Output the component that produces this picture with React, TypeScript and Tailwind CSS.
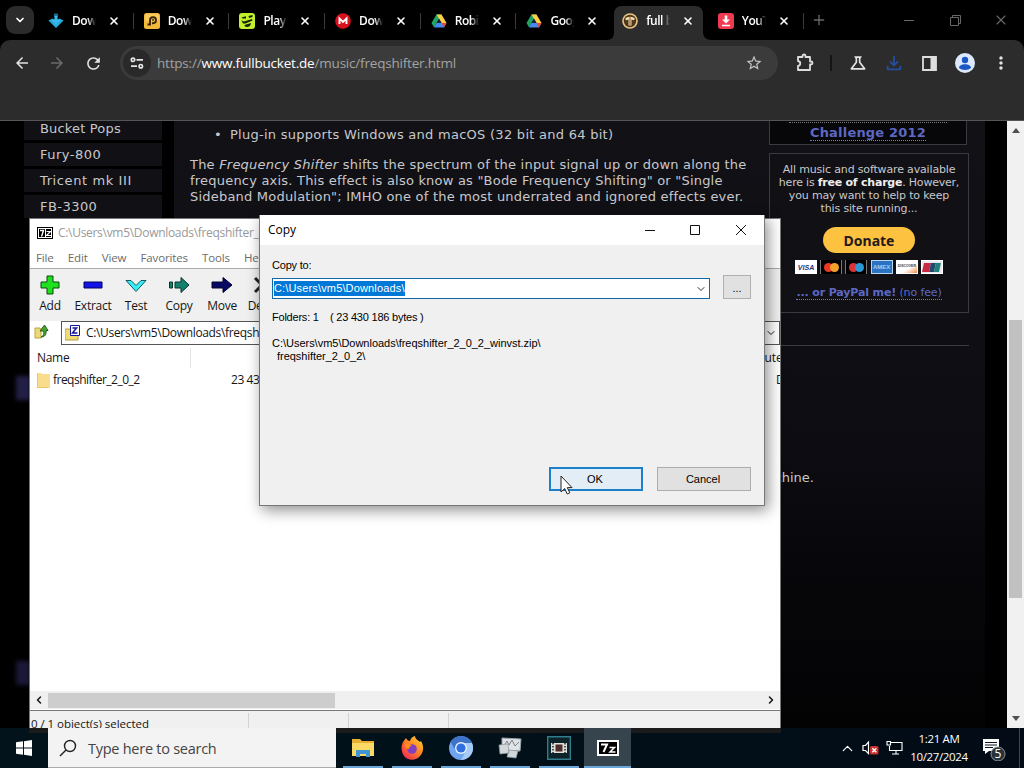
import type { ReactNode } from "react";
import {
  MdArrowBack,
  MdArrowForward,
  MdRefresh,
  MdStarBorder,
  MdOutlineScience,
  MdOutlineFileDownload,
  MdMoreVert,
} from "react-icons/md";
import { ChevronDown, ChevronLeft, ChevronRight, ChevronUp, Plus, X } from "lucide-react";

const SEGOE = "font-['Open_Sans','Noto_Sans',sans-serif]";
const DIALOG = "font-['Liberation_Sans',Arial,sans-serif]";
const VERDANA = "font-['DejaVu_Sans',Verdana,sans-serif]";

/* ---------- favicons ---------- */

const DiamondIcon = () => (
  <svg width="16" height="16" viewBox="0 0 16 16">
    <circle cx="8" cy="2.400" r="2.200" fill="#1c6e96" />
    <path d="M0.500 7.500 4.500 5.500 8 7 11.500 5.500 15.500 7.500 8 15z" fill="#27a9dc" />
    <path d="M6.500 3h3v4h3L8 11 3.500 7h3z" fill="#3db8e8" />
  </svg>
);

const PlugIcon = () => (
  <svg width="16" height="16" viewBox="0 0 16 16">
    <rect width="16" height="16" rx="2.500" fill="#f3b93b" />
    <rect x="1" y="1" width="14" height="7" rx="2" fill="#f8cb5c" />
    <path d="M3.500 11.500H6V7a3 3 0 1 1 3 3.200H8" fill="none" stroke="#3b2608" strokeWidth="1.900" />
    <path d="M9 6v2" stroke="#3b2608" strokeWidth="1.400" />
  </svg>
);

const FaceIcon = () => (
  <svg width="16" height="16" viewBox="0 0 16 16">
    <rect width="16" height="16" rx="3" fill="#c3f02c" />
    <path d="M2.500 4.500 7 3.200v2.300H3.500zM9.500 3 13.500 2v2L10 5z" fill="#15210a" />
    <path d="M2.500 7.500 5 8.500l8-2.500.5 1.500-7 3H4zM5.500 12l6.500-2c-.5 3-2 4-4 4-1.500 0-2.500-1-2.500-2z" fill="#15210a" />
  </svg>
);

const MegaIcon = () => (
  <svg width="16" height="16" viewBox="0 0 16 16">
    <circle cx="8" cy="8" r="7.800" fill="#d9111f" />
    <path d="M4.500 11V5.500L8 9l3.500-3.500V11" fill="none" stroke="#fff" strokeWidth="1.900" />
  </svg>
);

const DriveIcon = () => (
  <svg width="16" height="16" viewBox="0 0 16 16">
    <path d="M5.500 1.500h5L8 6 3 14.500.5 10z" fill="#1fa463" />
    <path d="M10.500 1.500 15.500 10h-5L5.500 1.500z" fill="#ffcf48" />
    <path d="M5.500 10h10L13 14.500H3z" fill="#4688f4" />
    <path d="M13 14.500 10.500 10h5z" fill="#e5483a" />
    <path d="M8 5.800 10.500 10h-5z" fill="#15233a" />
  </svg>
);

const BucketIcon = () => (
  <svg width="16" height="16" viewBox="0 0 16 16">
    <circle cx="8" cy="8" r="7.800" fill="#e8c586" />
    <circle cx="8" cy="8" r="6.200" fill="#50361a" />
    <path d="M3 6c2-3 8-3 10 0l-1.500 1.300-2-.8v6h-3v-6l-2 .8z" fill="#f3ddb0" />
    <path d="M8 3v9" stroke="#7a5a30" />
  </svg>
);

const TubeIcon = () => (
  <svg width="16" height="16" viewBox="0 0 16 16">
    <rect width="16" height="16" rx="3" fill="#ef3a52" />
    <path d="M6.700 2.500h2.600V6.500H12L8 10.500 4 6.500h2.700zM4 11.700h8v1.600H4z" fill="#fff" />
  </svg>
);

type TabDef = { title: string; icon: ReactNode; active?: boolean };
const TABS: TabDef[] = [
  { title: "Down", icon: <DiamondIcon /> },
  { title: "Down", icon: <PlugIcon /> },
  { title: "Play", icon: <FaceIcon /> },
  { title: "Down", icon: <MegaIcon /> },
  { title: "Robin", icon: <DriveIcon /> },
  { title: "Goog", icon: <DriveIcon /> },
  { title: "full b", icon: <BucketIcon />, active: true },
  { title: "YouT", icon: <TubeIcon /> },
];

function Tab({ tab, divider }: { tab: TabDef; divider: boolean }) {
  return (
    <div
      className={
        "relative flex h-[34px] w-[95.7px] shrink-0 items-center pb-[5px] pl-[10px] " +
        (tab.active ? "z-10" : "")
      }
    >
      {tab.active && (
        <svg className="absolute top-0 -left-[6px] -z-10" width="106" height="34" viewBox="0 0 106 34">
          <path d="M0 34c6 0 8-3 8-8V8c0-5 3-8 8-8h73c5 0 8 3 8 8v18c0 5 3 8 9 8z" fill="#2c2c2c" />
        </svg>
      )}
      {tab.icon}
      <span
        className={
          "ml-[8px] w-[25px] overflow-hidden text-[12px] leading-[18px] font-semibold tracking-[-0.45px] whitespace-nowrap text-white " +
          "[mask-image:linear-gradient(to_right,#000_62%,transparent_96%)]"
        }
      >
        {tab.title}
      </span>
      <X className="ml-[11px] h-[12px] w-[12px] text-white" strokeWidth={3.2} />
      {divider && <i className="ml-auto h-[16px] w-px bg-[#3c3c3c]" />}
    </div>
  );
}

function Browser() {
  return (
    <div className={"flex h-[121px] shrink-0 flex-col bg-black " + SEGOE}>
      <div className="flex h-[40px] shrink-0 items-end">
        <div className="mb-[6px] ml-[6px] flex h-[28px] w-[28px] items-center justify-center rounded-[9px] bg-[#2b2b2b]">
          <ChevronDown className="h-[12px] w-[12px] text-white" strokeWidth={3.400} />
        </div>
        <div className="flex pl-[4px]">
          {TABS.map((t, i) => (
            <Tab key={i} tab={t} divider={i !== 5 && i !== 6} />
          ))}
        </div>
        <Plus className="mb-[12px] ml-[7px] h-[16px] w-[16px] text-[#686868]" strokeWidth={2} />
        <div className="mb-[12px] ml-auto flex items-center pr-[15px] text-[#686868]">
          <i className="mr-[36px] h-px w-[10px] bg-[#686868]" />
          <svg className="mr-[32px]" width="11" height="11" viewBox="0 0 11 11" fill="none" stroke="currentColor">
            <path d="M.5 2.500h8v8h-8zM2.500 2.500v-2h8v8h-2" />
          </svg>
          <X className="h-[16px] w-[16px]" strokeWidth={1.600} />
        </div>
      </div>
      <div className="flex flex-1 flex-col rounded-t-[10px] border-b border-[#555] bg-[#2c2c2c]">
        <div className="flex h-[46px] items-center text-[#e4e4e4]">
          <MdArrowBack className="ml-[13px] h-[18px] w-[18px]" />
          <MdArrowForward className="ml-[17px] h-[18px] w-[18px] text-[#6a6a6a]" />
          <MdRefresh className="ml-[18px] h-[19px] w-[19px]" />
          <div className="ml-[17px] flex h-[34px] w-[658px] items-center rounded-full bg-[#3b3b3b]">
            <div className="ml-[3px] flex h-[28px] w-[28px] items-center justify-center rounded-full bg-[#292929]">
              <svg width="14" height="12" viewBox="0 0 14 12" fill="none" stroke="#e5e5e5" strokeWidth="1.700">
                <circle cx="3" cy="2.800" r="1.700" />
                <path d="M6.500 2.800H13M1 9.200h6" />
                <circle cx="10.800" cy="9.200" r="1.700" />
              </svg>
            </div>
            <span className="ml-[6px] text-[13.500px] tracking-[-0.2px] whitespace-nowrap text-[#a3a3a3]">
              https://<span className="text-white">www.fullbucket.de</span>/music/freqshifter.html
            </span>
            <MdStarBorder className="mr-[15px] ml-auto h-[18px] w-[18px] text-[#c4c4c4]" />
          </div>
          <svg className="ml-[17px]" width="20" height="20" viewBox="0 0 20 20">
            <path
              d="M3 4h4.500V3a1.500 1.500 0 0 1 3 0v1H15v4.500h1a1.500 1.500 0 0 1 0 3h-1V17H3v-4c3-.5 3-4.500 0-5z"
              fill="none"
              stroke="#dedede"
              strokeWidth="1.800"
              strokeLinejoin="round"
            />
          </svg>
          <i className="ml-[15px] h-[16px] w-[2px] bg-[#151515]" />
          <MdOutlineScience className="ml-[16px] h-[20px] w-[20px]" />
          <MdOutlineFileDownload className="ml-[15px] h-[22px] w-[22px] text-[#254e9f]" />
          <svg className="ml-[17px]" width="15" height="15" viewBox="0 0 15 15">
            <path d="M1 1h13v13H1z" fill="none" stroke="#dedede" strokeWidth="1.800" />
            <path d="M8.500 1H14v13H8.500z" fill="#dedede" />
          </svg>
          <svg className="ml-[18px]" width="20" height="20" viewBox="0 0 20 20">
            <circle cx="10" cy="10" r="10" fill="#dde8fb" />
            <circle cx="10" cy="7" r="3.200" fill="#1a56c4" />
            <path d="M4 15c0-5 12-5 12 0-3 2.500-9 2.500-12 0z" fill="#1a56c4" />
          </svg>
          <MdMoreVert className="ml-[16px] h-[20px] w-[20px]" />
        </div>
      </div>
    </div>
  );
}

/* ---------- web page ---------- */

const CARD = "flex h-[14px] w-[22px] items-center justify-center border";

const INSTRUMENTS = [
  { name: "Bucket Pops", style: "h-[19px] pb-[3px] tracking-[0.17px]" },
  { name: "Fury-800", style: "h-[23px] tracking-[0.5px]" },
  { name: "Tricent mk III", style: "h-[23px] tracking-[0.6px]" },
  { name: "FB-3300", style: "h-[23px] tracking-[0.45px]" },
];

function PageContent() {
  return (
    <div className={"flex flex-1 overflow-hidden bg-black text-[#c8c8cc] " + VERDANA}>
      <div className="ml-[24px] flex w-[138px] shrink-0 flex-col gap-[3px]">
        {INSTRUMENTS.map((s) => (
          <div key={s.name} className={"flex shrink-0 items-center bg-[#101015] pl-[16px] text-[13px] " + s.style}>
            {s.name}
          </div>
        ))}
        <div className="mt-[155px] -ml-[8px] h-[24px] w-[14px] bg-[#221f46] blur-[2px]" />
        <div className="mt-[258px] -ml-[8px] h-[24px] w-[14px] bg-[#1a1836] blur-[2px]" />
      </div>
      <div className="ml-[12px] flex w-[811px] shrink-0 bg-linear-to-b from-[#111116] via-[#0d0d13] to-[#030304] pl-[16px]">
        <div className="w-[579px] shrink-0 text-[13px] leading-[16px] whitespace-nowrap">
          <div className="mt-[6px] flex tracking-[0.27px]">
            <span className="w-[40px] pr-[8px] text-right">•</span>
            Plug-in supports Windows and macOS (32 bit and 64 bit)
          </div>
          <p className="mt-[14px] tracking-[0.21px]">
            The <em>Frequency Shifter</em> shifts the spectrum of the input signal up or down along the
            <br />
            frequency axis. This effect is also know as "Bode Frequency Shifting" or "Single
            <br />
            Sideband Modulation"; IMHO one of the most underrated and ignored effects ever.
          </p>
          <p className="mt-[265px] text-right text-[13px]">
            <span className="mr-[-45px]">chine.</span>
          </p>
        </div>
        <div className="flex w-[200px] flex-col">
          <div className="h-[24px] w-[198px] border border-t-0 border-[#3a3a42] bg-[#07070a] text-center text-[13px] leading-[16px] font-bold tracking-[0.2px] text-[#5d68c4]">
            <div className="mx-auto h-[2px] w-[158px] border-b border-dotted border-[#777]" />
            <span className="mt-[2px] inline-block border-b border-dotted border-[#6f7bd8] leading-[15px]">Challenge 2012</span>
          </div>
          <div className="mt-[8px] flex h-[160px] flex-col items-center border border-[#3a3a42] bg-[#101015] pt-[9px] text-center text-[11px] leading-[13px] whitespace-nowrap">
            <div className="tracking-[-0.16px]">All music and software available</div>
            <div className="tracking-[-0.22px]">
              here is <b className="text-[#eee]">free of charge</b>. However,
            </div>
            <div className="tracking-[-0.15px]">you may want to help to keep</div>
            <div className="tracking-[-0.15px]">this site running...</div>
            <div className="mt-[12px] flex h-[26px] w-[92px] items-center justify-center rounded-full bg-[#fdc23f] font-['Noto_Sans',sans-serif] text-[14px] font-bold text-[#241a1a]">
              Donate
            </div>
            <div className="mt-[7px] flex gap-[3.200px] font-['Liberation_Sans',sans-serif] text-[7px] leading-none font-bold">
              <span className={CARD + " border-white bg-white text-[#27307c] italic"}>VISA</span>
              <span className={CARD + " border-y-0 border-[#777] bg-black"}>
                <i className="h-[9px] w-[9px] rounded-full bg-[#ea3a25]" />
                <i className="-ml-[3px] h-[9px] w-[9px] rounded-full bg-[#f4a12b]" />
              </span>
              <span className={CARD + " border-y-0 border-[#777] bg-black"}>
                <i className="h-[9px] w-[9px] rounded-full bg-[#df3238]" />
                <i className="-ml-[3px] h-[9px] w-[9px] rounded-full bg-[#2b98d4]" />
              </span>
              <span className={CARD + " border-[#b8d6f0] bg-[#2b73c0] text-[6px] text-[#a9cdf0]"}>AMEX</span>
              <span className={CARD + " overflow-hidden border-white bg-linear-to-br from-white from-60% to-[#ee8a35] text-[3.500px] text-[#444]"}>
                DISCOVER
              </span>
              <span className={CARD + " border-white bg-[#e9e9ee]"}>
                <i className="h-[9px] w-[7px] -skew-x-12 bg-[#c92a42]" />
                <i className="h-[9px] w-[5px] -skew-x-12 bg-[#24476f]" />
                <i className="h-[9px] w-[5px] -skew-x-12 bg-[#1f8079]" />
              </span>
            </div>
            <div className="mt-[12px] border-b border-dotted border-[#6f7bd8] leading-[13px] tracking-[-0.13px] text-[#5d68c4]">
              <b>... or PayPal me!</b> (no fee)
            </div>
          </div>
          <div className="mt-[32px] border-t border-[#3a3a42]" />
        </div>
      </div>
      <div className="ml-auto flex w-[17px] flex-col items-center bg-[#f1f1f1]">
        <svg className="mt-[7px]" width="8" height="5" viewBox="0 0 8 5">
          <path d="M0 5 4 0l4 5z" fill="#505050" />
        </svg>
        <div className="mt-[187px] h-[278px] w-[13px] bg-[#c1c1c1]" />
        <svg className="mt-auto mb-[7px]" width="8" height="5" viewBox="0 0 8 5">
          <path d="M0 0h8L4 5z" fill="#505050" />
        </svg>
      </div>
    </div>
  );
}

/* ---------- 7-Zip ---------- */

function SevenZip({ large = false }: { large?: boolean }) {
  return large ? (
    <svg width="22" height="16" viewBox="0 0 22 16" className="shrink-0">
      <rect width="22" height="16" fill="#fff" />
      <rect x="2" y="2" width="18" height="12" fill="#000" />
      <path d="M4 4.500h6L6.500 12" fill="none" stroke="#fff" strokeWidth="2" />
      <path d="M12.500 7.500h5l-4.500 4.500h5.500" fill="none" stroke="#fff" strokeWidth="1.500" />
    </svg>
  ) : (
    <svg width="16" height="12" viewBox="0 0 16 12" className="shrink-0">
      <rect width="16" height="12" fill="#000" />
      <rect x="1" y="1" width="14" height="10" fill="#fff" />
      <rect x="2" y="2" width="6" height="8" fill="#000" />
      <rect x="9" y="2" width="5" height="8" fill="#000" />
      <path d="M3 3.500h3.500L4.500 9.500" fill="none" stroke="#fff" strokeWidth="1.400" />
      <path d="M9.500 4.500h4l-4 4h4.500" fill="none" stroke="#fff" strokeWidth="1.200" />
    </svg>
  );
}

const TOOLS: { label: string; width: string; icon: ReactNode }[] = [
  {
    label: "Add",
    width: "w-[42px]",
    icon: <path d="M8 1h6v6h6v6h-6v6H8v-6H2V7h6z" fill="#1ee01e" stroke="#084808" />,
  },
  { label: "Extract", width: "w-[44px]", icon: <path d="M2 7h18v6H2z" fill="#1313e8" stroke="#000060" /> },
  {
    label: "Test",
    width: "w-[42px]",
    icon: <path d="m1 5.500 5 0 5 5 5-5 5 0-10 11z" fill="#35edf5" stroke="#135a62" />,
  },
  {
    label: "Copy",
    width: "w-[44px]",
    icon: <path d="M1.500 7h3v6h-3zM7 7h6V2.500L21 10l-8 7.500V13H7z" fill="#16806c" stroke="#06352e" />,
  },
  { label: "Move", width: "w-[42px]", icon: <path d="M1 7h11V2.500L21 10l-9 7.500V13H1z" fill="#080865" stroke="#02022e" /> },
  { label: "Delete", width: "w-[44px]", icon: <path d="m1 3 14 14M15 3 1 17" stroke="#222" strokeWidth="3" /> },
];

function ZipWindow() {
  return (
    <div className={"absolute top-[218px] left-[29px] flex h-[510px] w-[752px] flex-col overflow-hidden border border-b-0 border-[#777] bg-white text-[12px] text-[#151515] " + SEGOE}>
      <div className="flex h-[27px] shrink-0 items-center pl-[7px] whitespace-nowrap text-[#999]">
        <SevenZip />
        <span className="ml-[5px] text-[12px] tracking-[-0.3px]">C:\Users\vm5\Downloads\freqshifter_2_0_2_winvst.zip\</span>
      </div>
      <div className="flex h-[23px] shrink-0 items-center gap-[14.200px] border-b border-[#aaa] pt-[2px] pl-[6px] text-[11.500px] tracking-[-0.15px] text-[#6c6c6c]">
        {["File", "Edit", "View", "Favorites", "Tools", "Help"].map((m) => (
          <span key={m}>{m}</span>
        ))}
      </div>
      <div className="flex h-[52px] shrink-0 bg-[#f0f0f0] text-[12px] tracking-[-0.25px]">
        <div className="-ml-px flex">
          {TOOLS.map((t) => (
            <div key={t.label} className={"flex shrink-0 flex-col items-center pt-[6px] " + t.width}>
              <svg width="22" height="20" viewBox="0 0 22 20">
                {t.icon}
              </svg>
              <span className="mt-[2px] leading-[18px]">{t.label}</span>
            </div>
          ))}
        </div>
      </div>
      <div className="flex h-[24px] shrink-0 bg-[#f0f0f0]">
        <div className="w-[31px] bg-white pt-[2px] pl-[4px]">
          <svg width="15" height="16" viewBox="0 0 15 16">
            <path d="M1 5h5l1 2v8H1z" fill="#ecd979" stroke="#bca53f" />
            <path d="M7 14c3-1 3-4 2.500-6H6l4.500-6L14 7.500h-2c.5 4-1 6.500-5 6.500z" fill="#45a52f" stroke="#28631b" />
          </svg>
        </div>
        <div className="flex flex-1 items-center border border-[#555] bg-white">
          <svg className="ml-[3px]" width="16" height="16" viewBox="0 0 16 16">
            <path d="M0 4h6l1 2h6v9H0z" fill="#f0dd70" stroke="#b79e3b" />
            <path d="M5.500.500h9v10h-9z" fill="#fff" stroke="#1515a0" />
            <path d="M7.500 3h4l-4 5h5" fill="none" stroke="#1515a0" strokeWidth="1.500" />
          </svg>
          <span className="ml-[5px] tracking-[-0.33px]">C:\Users\vm5\Downloads\freqshifter_2_0_2_winvst.zip\</span>
          <ChevronDown className="mr-[2px] ml-auto h-[12px] w-[12px]" />
        </div>
      </div>
      <div className="flex h-[25px] shrink-0 items-center pt-px pl-[7px]">
        <span className="w-[153px] tracking-[-0.3px]">Name</span>
        <i className="h-[20px] w-px bg-[#e4e4e4]" />
        <span className="ml-auto w-[64px] overflow-hidden pl-[17px] whitespace-nowrap">Attributes</span>
      </div>
      <div className="flex h-[20px] shrink-0 items-center pl-[7px]">
        <svg width="13" height="15" viewBox="0 0 13 15">
          <path d="M0 0h4l1 1h8v14H0z" fill="#f9dd8d" />
          <path d="M.5.500v14h11" fill="none" stroke="#eec667" />
        </svg>
        <span className="ml-[3px] w-[178px] tracking-[-0.52px]">freqshifter_2_0_2</span>
        <span className="tracking-[-0.45px]">23 430 186</span>
        <span className="ml-auto w-[4px] overflow-hidden">D</span>
      </div>
      <div className="flex-1" />
      <div className="flex h-[18px] shrink-0 items-center bg-[#f0f0f0]">
        <ChevronLeft className="mr-[3px] ml-[3px] h-[12px] w-[12px]" strokeWidth={3} />
        <div className="h-[15px] w-[287px] bg-[#cdcdcd]" />
        <ChevronRight className="mr-[3px] ml-auto h-[12px] w-[12px]" strokeWidth={3} />
      </div>
      <div className="mt-px flex h-[18px] shrink-0 overflow-hidden border-t border-[#777] bg-[#f0f0f0] tracking-[-0.04px]">
        <span className="w-[218px] shrink-0 pt-[4px] pl-px text-[11.500px]">0 / 1 object(s) selected</span>
        {[0, 1, 2].map((n) => (
          <i key={n} className="mt-[2px] w-[100px] border-l border-[#d2d2d2]" />
        ))}
      </div>
    </div>
  );
}

function CopyDialog() {
  return (
    <div className={"absolute top-[215px] left-[259px] flex h-[291px] w-[506px] flex-col border border-t-0 border-[#777] bg-[#f0f0f0] text-[11px] text-black shadow-[3px_4px_14px_rgba(0,0,0,0.45)] " + DIALOG}>
      <div className={"flex h-[30px] shrink-0 items-center bg-white pl-[8px] text-[12px] " + SEGOE}>
        Copy
        <svg className="mr-[17px] ml-auto" width="102" height="11" viewBox="0 0 102 11" fill="none" stroke="#111">
          <path d="M0 5.500h10M45.500.500h9v9h-9zM91 0l10 10M101 0 91 10" />
        </svg>
      </div>
      <div className="flex flex-1 flex-col px-[12px] leading-[13px] whitespace-nowrap">
        <span className="mt-[14px] tracking-[-0.2px]">Copy to:</span>
        <div className="mt-[3px] flex items-end justify-between">
          <div className="flex h-[21px] w-[438px] items-center border border-[#1368a8] bg-white pl-px">
            <span className="bg-[#0078d7] leading-[15px] tracking-[0.15px] text-white">C:\Users\vm5\Downloads\</span>
            <ChevronDown className="mr-[2px] ml-auto h-[12px] w-[12px] text-[#333]" strokeWidth={2} />
          </div>
          <span className="mr-[1px] flex h-[24px] w-[28px] items-center justify-center border border-[#b0b0b0] bg-[#e1e1e1] pt-[3px]">...</span>
        </div>
        <span className="mt-[12px] tracking-[-0.22px] whitespace-pre">Folders: 1    ( 23 430 186 bytes )</span>
        <span className="mt-[13px] tracking-[-0.02px]">C:\Users\vm5\Downloads\freqshifter_2_0_2_winvst.zip\</span>
        <span className="ml-[5px] tracking-[-0.02px]">freqshifter_2_0_2\</span>
        <div className="mt-auto mr-[1px] mb-[14px] flex justify-end gap-[14px]">
          <span className="flex h-[24px] w-[94px] items-center justify-center border-2 border-[#1b7fc9] bg-[#e3edf6] pr-[2px]">OK</span>
          <span className="flex h-[24px] w-[94px] items-center justify-center border border-[#adadad] bg-[#e1e1e1] pr-[2px]">Cancel</span>
        </div>
      </div>
    </div>
  );
}

/* ---------- taskbar ---------- */

const APPS: { name: string; icon: ReactNode }[] = [
  {
    name: "explorer",
    icon: (
      <svg width="24" height="22" viewBox="0 0 24 22">
        <path d="M1 2h8l2 2h12v15H1z" fill="#e8af35" />
        <path d="M1 6h22v13H1z" fill="#fad965" />
        <path d="M5 20v-7h14v7h-4v-3H9v3z" fill="#3f96d4" />
      </svg>
    ),
  },
  {
    name: "firefox",
    icon: (
      <svg width="24" height="24" viewBox="0 0 24 24">
        <defs>
          <linearGradient id="fox" x1="1" y1="0" x2="0.2" y2="1">
            <stop offset="0" stopColor="#ffe13a" />
            <stop offset="0.500" stopColor="#ff8420" />
            <stop offset="1" stopColor="#f02a58" />
          </linearGradient>
        </defs>
        <path d="M3 6c1-1 2-3 3-4 1 2 2 3 4 3 1-3 2-4 5-5 0 3 3 4 5 6l1-1c3 5 3 11-1 15-4 5-12 5-16 0C1 16 1 10 3 6z" fill="url(#fox)" />
        <circle cx="12" cy="13" r="4.800" fill="#8040c0" />
        <path d="M5 8c3-1 5 0 7 2-2 0-3 1-3 3-2 0-5-2-4-5z" fill="#ff8a22" />
      </svg>
    ),
  },
  {
    name: "chromium",
    icon: (
      <svg width="24" height="24" viewBox="0 0 24 24">
        <circle cx="12" cy="12" r="12" fill="#6ea5ee" />
        <path d="M12 0a12 12 0 0 0-10.400 6L7 15l5-8h11A12 12 0 0 0 12 0z" fill="#3e72c8" />
        <path d="M23 7H12l5 8-5 9A12 12 0 0 0 23 7z" fill="#a7caf7" />
        <circle cx="12" cy="12" r="6" fill="#eaf3ff" />
        <circle cx="12" cy="12" r="4.600" fill="#2f6fe0" />
      </svg>
    ),
  },
  {
    name: "monitor",
    icon: (
      <svg width="24" height="22" viewBox="0 0 24 22">
        <path d="m4 1 19 1-1 12-18-1z" fill="#dfe3e5" stroke="#9aa1a6" />
        <path d="m7 7 2-3 2 4 3-5 3 6 4-4" fill="none" stroke="#7a8287" />
        <path d="m1 8 9-1 1 9-9 1zM11 13l9 1-2 7-9-1z" fill="#d2d7d9" stroke="#8e969b" strokeWidth="0.700" />
      </svg>
    ),
  },
  {
    name: "video",
    icon: (
      <svg width="24" height="24" viewBox="0 0 24 24">
        <path d="M.7.7h22.600v22.600H.7z" fill="#0c2329" stroke="#2f7d88" strokeWidth="1.400" />
        <path d="M4 7h16v10H4z" fill="#dfe0da" />
        <path d="M8.500 8.500h7v7h-7z" fill="#4c2d2c" />
        <path d="M6 7v10M18 7v10" stroke="#222" strokeWidth="1.500" strokeDasharray="1.500 1.500" />
      </svg>
    ),
  },
  { name: "7zip", icon: <SevenZip large /> },
];

function Taskbar() {
  return (
    <div className={"relative flex h-[40px] shrink-0 bg-linear-to-r from-[#02131b] via-[#011019] to-[#020b16] text-white " + SEGOE}>
      <div className="absolute top-0 left-[29px] h-[5px] w-[752px] bg-[#1b1b1c]" />
      <div className="relative flex w-[48px] items-center justify-center">
        <svg width="16" height="16" viewBox="0 0 16 16" fill="#fff">
          <path d="M0 2.300 7 1.300V7.500H0zM8 1.200 16 0v7.500H8zM0 8.500h7v6.200l-7-1zM8 8.500h8V16l-8-1.200z" />
        </svg>
      </div>
      <div className="relative flex w-[288px] items-center border-b border-[#aaa] bg-[#f3f3f3] pl-[11px] text-[#444]">
        <svg width="18" height="18" viewBox="0 0 18 18" fill="none" stroke="#222" strokeWidth="1.400">
          <circle cx="11" cy="7" r="5.500" />
          <path d="m7 11-6 6" />
        </svg>
        <span className="ml-[11px] pt-[2px] text-[14.500px] tracking-[-0.26px]">Type here to search</span>
      </div>
      <div className="relative ml-[2px] flex">
        {APPS.map((a) => (
          <div
            key={a.name}
            className={"flex h-[40px] flex-col items-center " + (a.name === "7zip" ? "ml-px w-[47px] bg-[#36444d]" : "w-[49px]")}
          >
            <div className="flex flex-1 items-center justify-center pt-[2px]">{a.icon}</div>
            <i className={"h-[2px] bg-[#68a7d8] " + (a.name === "7zip" ? "w-[47px]" : "w-[40px]")} />
          </div>
        ))}
      </div>
      <div className="ml-auto flex items-center">
        <ChevronUp className="h-[17px] w-[17px]" strokeWidth={1.700} />
        <svg className="ml-[6px]" width="18" height="16" viewBox="0 0 18 16">
          <path d="M1 5.500h2.500l3-3.500v11.500l-3-3H1z" fill="none" stroke="#fff" strokeWidth="1.200" />
          <rect x="8" y="6" width="8.500" height="8.500" rx="1.500" fill="#c9302e" />
          <path d="m10.300 8.300 4 4m0-4-4 4" stroke="#fff" strokeWidth="1.500" />
        </svg>
        <svg className="ml-[6px]" width="17" height="16" viewBox="0 0 17 16" fill="none" stroke="#fff" strokeWidth="1.100">
          <path d="M5 2.500h11v8H3.500V6M10 10.500v3.500M6 14h7M1 1.500h3.500V5H1z" />
        </svg>
        <div className="ml-[6px] flex w-[60px] flex-col items-center text-[11.500px] leading-[18px] tracking-[-0.35px] whitespace-nowrap">
          <span>1:21 AM</span>
          <span>10/27/2024</span>
        </div>
        <svg className="ml-[13px]" width="26" height="26" viewBox="0 0 26 26">
          <path d="M1 4h16v12H7l-4 3v-3H1z" fill="#fff" />
          <path d="M3 7.500h12M3 10h12M3 12.500h8" stroke="#0a1720" />
          <circle cx="16" cy="19" r="7" fill="#27323a" stroke="#8b9298" />
          <text x="16" y="23" textAnchor="middle" fontSize="12" fill="#fff">
            5
          </text>
        </svg>
        <i className="ml-[11px] h-[40px] w-px bg-[#3e464c]" />
        <i className="w-[4px]" />
      </div>
    </div>
  );
}

export default function App() {
  return (
    <div className="relative flex h-[768px] w-[1024px] flex-col overflow-hidden bg-black">
      <Browser />
      <PageContent />
      <ZipWindow />
      <CopyDialog />
      <Taskbar />
      <svg className="absolute top-[475px] left-[560px]" width="13" height="21" viewBox="0 0 13 21">
        <path d="M1 1v16l3.700-3.500L7.200 19l2.600-1.200-2.500-5.200H12z" fill="#fff" stroke="#222" />
      </svg>
    </div>
  );
}
